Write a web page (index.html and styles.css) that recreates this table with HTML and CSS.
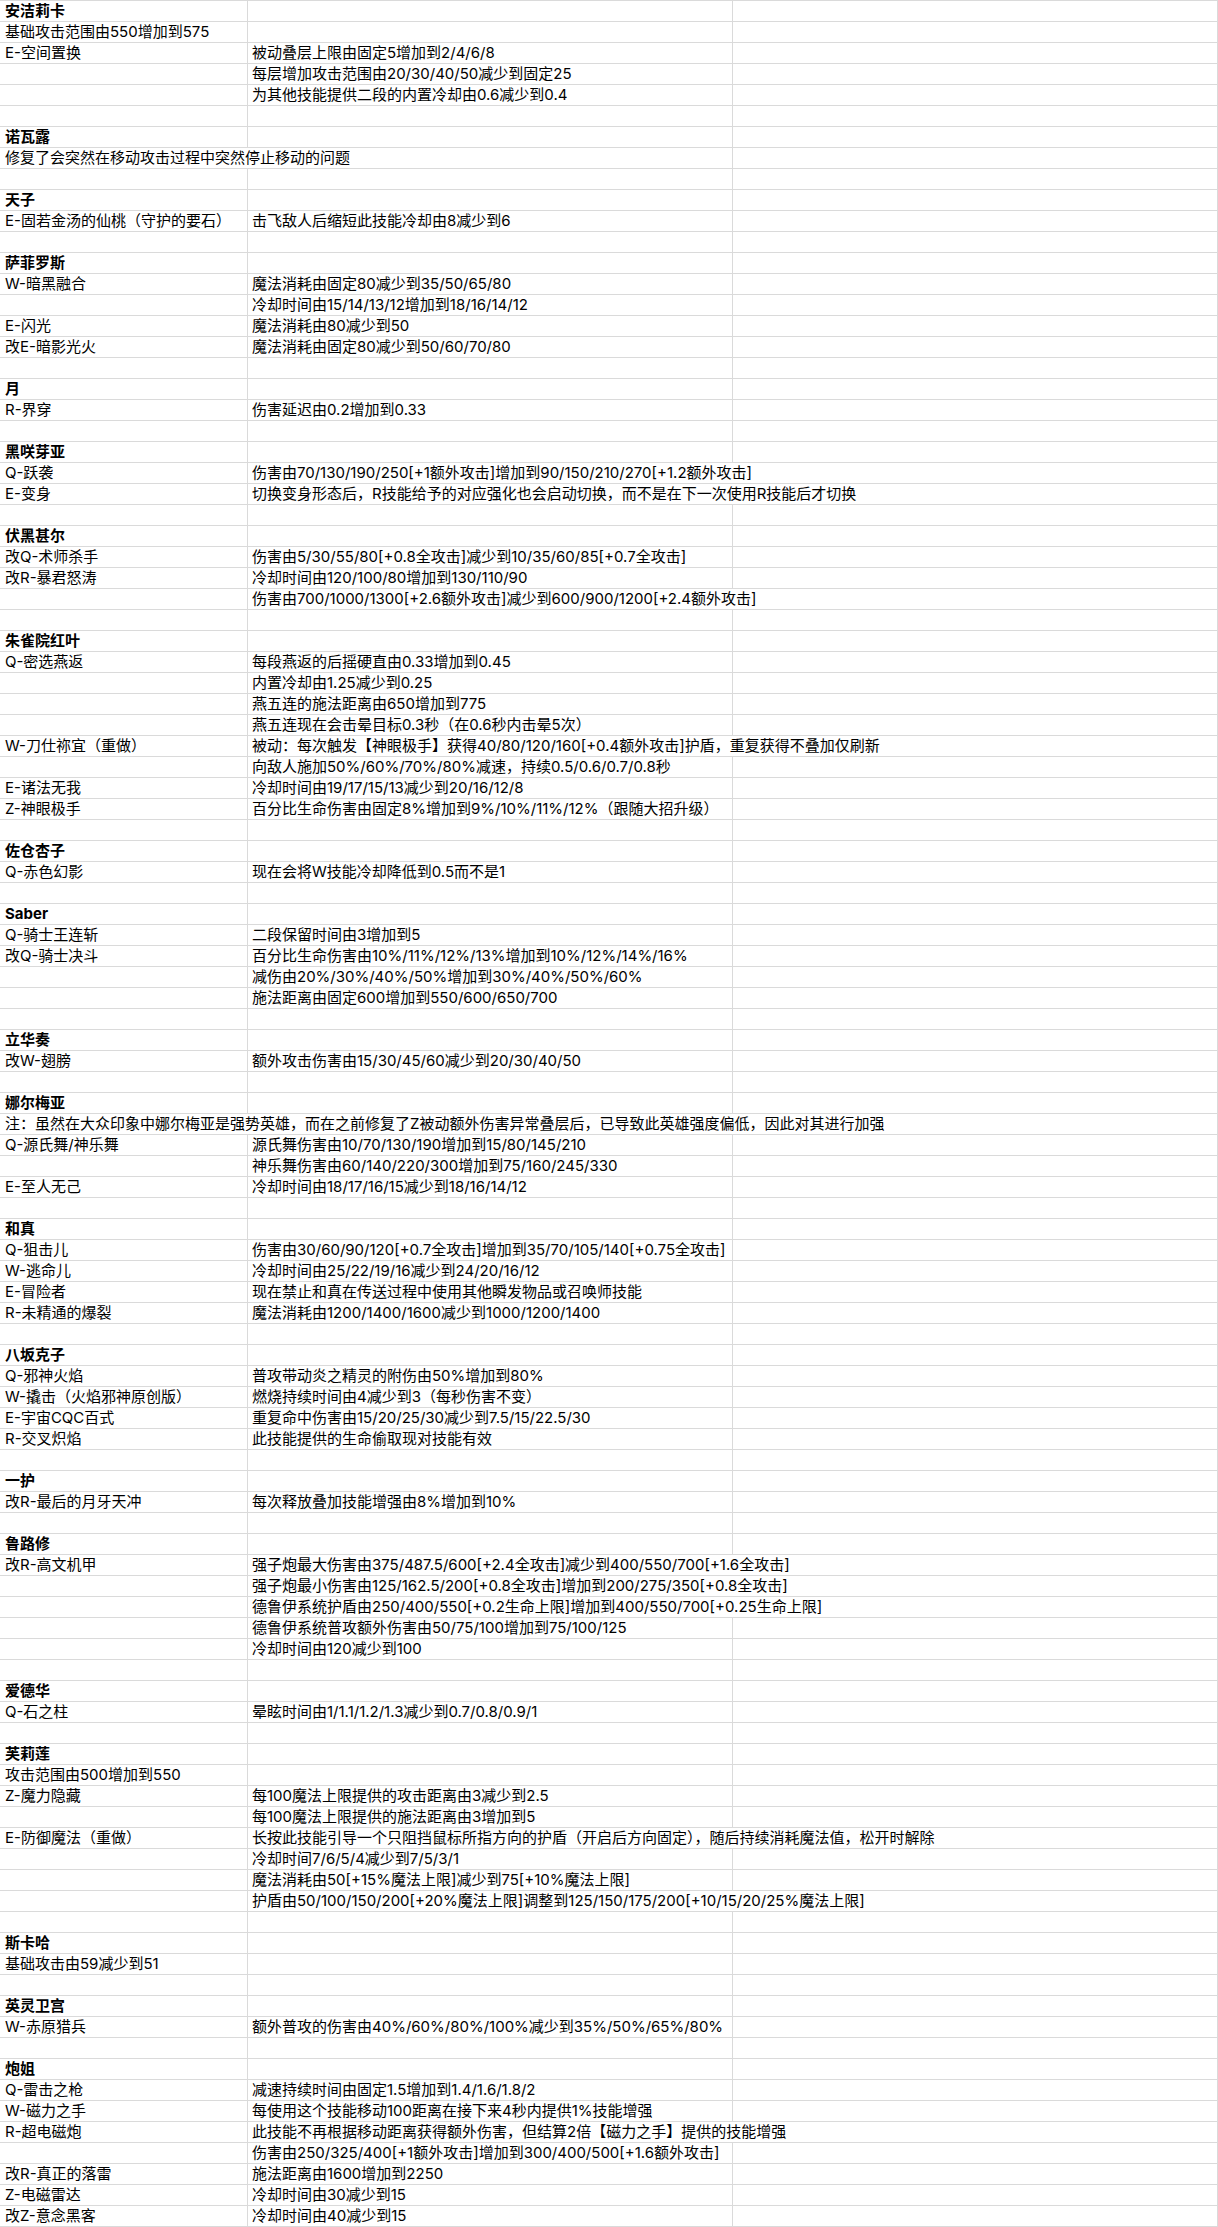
FILE: index.html
```html
<!DOCTYPE html>
<html lang="zh-CN">
<head>
<meta charset="utf-8">
<title>平衡性调整</title>
<link rel="stylesheet" href="styles.css">
</head>
<body>
<div class="sheet">
<div class="row"><div class="c h">安洁莉卡</div><div class="c"></div><div class="c"></div></div>
<div class="row"><div class="c">基础攻击范围由550增加到575</div><div class="c"></div><div class="c"></div></div>
<div class="row"><div class="c">E-空间置换</div><div class="c">被动叠层上限由固定5增加到2/4/6/8</div><div class="c"></div></div>
<div class="row"><div class="c"></div><div class="c">每层增加攻击范围由20/30/40/50减少到固定25</div><div class="c"></div></div>
<div class="row"><div class="c"></div><div class="c">为其他技能提供二段的内置冷却由0.6减少到0.4</div><div class="c"></div></div>
<div class="row"><div class="c"></div><div class="c"></div><div class="c"></div></div>
<div class="row"><div class="c h">诺瓦露</div><div class="c"></div><div class="c"></div></div>
<div class="row"><div class="c span2">修复了会突然在移动攻击过程中突然停止移动的问题</div><div class="c"></div></div>
<div class="row"><div class="c"></div><div class="c"></div><div class="c"></div></div>
<div class="row"><div class="c h">天子</div><div class="c"></div><div class="c"></div></div>
<div class="row"><div class="c">E-固若金汤的仙桃（守护的要石）</div><div class="c">击飞敌人后缩短此技能冷却由8减少到6</div><div class="c"></div></div>
<div class="row"><div class="c"></div><div class="c"></div><div class="c"></div></div>
<div class="row"><div class="c h">萨菲罗斯</div><div class="c"></div><div class="c"></div></div>
<div class="row"><div class="c">W-暗黑融合</div><div class="c">魔法消耗由固定80减少到35/50/65/80</div><div class="c"></div></div>
<div class="row"><div class="c"></div><div class="c">冷却时间由15/14/13/12增加到18/16/14/12</div><div class="c"></div></div>
<div class="row"><div class="c">E-闪光</div><div class="c">魔法消耗由80减少到50</div><div class="c"></div></div>
<div class="row"><div class="c">改E-暗影光火</div><div class="c">魔法消耗由固定80减少到50/60/70/80</div><div class="c"></div></div>
<div class="row"><div class="c"></div><div class="c"></div><div class="c"></div></div>
<div class="row"><div class="c h">月</div><div class="c"></div><div class="c"></div></div>
<div class="row"><div class="c">R-界穿</div><div class="c">伤害延迟由0.2增加到0.33</div><div class="c"></div></div>
<div class="row"><div class="c"></div><div class="c"></div><div class="c"></div></div>
<div class="row"><div class="c h">黑咲芽亚</div><div class="c"></div><div class="c"></div></div>
<div class="row"><div class="c">Q-跃袭</div><div class="c span2">伤害由70/130/190/250[+1额外攻击]增加到90/150/210/270[+1.2额外攻击]</div></div>
<div class="row"><div class="c">E-变身</div><div class="c span2">切换变身形态后，R技能给予的对应强化也会启动切换，而不是在下一次使用R技能后才切换</div></div>
<div class="row"><div class="c"></div><div class="c"></div><div class="c"></div></div>
<div class="row"><div class="c h">伏黑甚尔</div><div class="c"></div><div class="c"></div></div>
<div class="row"><div class="c">改Q-术师杀手</div><div class="c">伤害由5/30/55/80[+0.8全攻击]减少到10/35/60/85[+0.7全攻击]</div><div class="c"></div></div>
<div class="row"><div class="c">改R-暴君怒涛</div><div class="c">冷却时间由120/100/80增加到130/110/90</div><div class="c"></div></div>
<div class="row"><div class="c"></div><div class="c span2">伤害由700/1000/1300[+2.6额外攻击]减少到600/900/1200[+2.4额外攻击]</div></div>
<div class="row"><div class="c"></div><div class="c"></div><div class="c"></div></div>
<div class="row"><div class="c h">朱雀院红叶</div><div class="c"></div><div class="c"></div></div>
<div class="row"><div class="c">Q-密选燕返</div><div class="c">每段燕返的后摇硬直由0.33增加到0.45</div><div class="c"></div></div>
<div class="row"><div class="c"></div><div class="c">内置冷却由1.25减少到0.25</div><div class="c"></div></div>
<div class="row"><div class="c"></div><div class="c">燕五连的施法距离由650增加到775</div><div class="c"></div></div>
<div class="row"><div class="c"></div><div class="c">燕五连现在会击晕目标0.3秒（在0.6秒内击晕5次）</div><div class="c"></div></div>
<div class="row"><div class="c">W-刀仕祢宜（重做）</div><div class="c span2">被动：每次触发【神眼极手】获得40/80/120/160[+0.4额外攻击]护盾，重复获得不叠加仅刷新</div></div>
<div class="row"><div class="c"></div><div class="c">向敌人施加50%/60%/70%/80%减速，持续0.5/0.6/0.7/0.8秒</div><div class="c"></div></div>
<div class="row"><div class="c">E-诸法无我</div><div class="c">冷却时间由19/17/15/13减少到20/16/12/8</div><div class="c"></div></div>
<div class="row"><div class="c">Z-神眼极手</div><div class="c">百分比生命伤害由固定8%增加到9%/10%/11%/12%（跟随大招升级）</div><div class="c"></div></div>
<div class="row"><div class="c"></div><div class="c"></div><div class="c"></div></div>
<div class="row"><div class="c h">佐仓杏子</div><div class="c"></div><div class="c"></div></div>
<div class="row"><div class="c">Q-赤色幻影</div><div class="c">现在会将W技能冷却降低到0.5而不是1</div><div class="c"></div></div>
<div class="row"><div class="c"></div><div class="c"></div><div class="c"></div></div>
<div class="row"><div class="c h">Saber</div><div class="c"></div><div class="c"></div></div>
<div class="row"><div class="c">Q-骑士王连斩</div><div class="c">二段保留时间由3增加到5</div><div class="c"></div></div>
<div class="row"><div class="c">改Q-骑士决斗</div><div class="c">百分比生命伤害由10%/11%/12%/13%增加到10%/12%/14%/16%</div><div class="c"></div></div>
<div class="row"><div class="c"></div><div class="c">减伤由20%/30%/40%/50%增加到30%/40%/50%/60%</div><div class="c"></div></div>
<div class="row"><div class="c"></div><div class="c">施法距离由固定600增加到550/600/650/700</div><div class="c"></div></div>
<div class="row"><div class="c"></div><div class="c"></div><div class="c"></div></div>
<div class="row"><div class="c h">立华奏</div><div class="c"></div><div class="c"></div></div>
<div class="row"><div class="c">改W-翅膀</div><div class="c">额外攻击伤害由15/30/45/60减少到20/30/40/50</div><div class="c"></div></div>
<div class="row"><div class="c"></div><div class="c"></div><div class="c"></div></div>
<div class="row"><div class="c h">娜尔梅亚</div><div class="c"></div><div class="c"></div></div>
<div class="row"><div class="c span3">注：虽然在大众印象中娜尔梅亚是强势英雄，而在之前修复了Z被动额外伤害异常叠层后，已导致此英雄强度偏低，因此对其进行加强</div></div>
<div class="row"><div class="c">Q-源氏舞/神乐舞</div><div class="c">源氏舞伤害由10/70/130/190增加到15/80/145/210</div><div class="c"></div></div>
<div class="row"><div class="c"></div><div class="c">神乐舞伤害由60/140/220/300增加到75/160/245/330</div><div class="c"></div></div>
<div class="row"><div class="c">E-至人无己</div><div class="c">冷却时间由18/17/16/15减少到18/16/14/12</div><div class="c"></div></div>
<div class="row"><div class="c"></div><div class="c"></div><div class="c"></div></div>
<div class="row"><div class="c h">和真</div><div class="c"></div><div class="c"></div></div>
<div class="row"><div class="c">Q-狙击儿</div><div class="c">伤害由30/60/90/120[+0.7全攻击]增加到35/70/105/140[+0.75全攻击]</div><div class="c"></div></div>
<div class="row"><div class="c">W-逃命儿</div><div class="c">冷却时间由25/22/19/16减少到24/20/16/12</div><div class="c"></div></div>
<div class="row"><div class="c">E-冒险者</div><div class="c">现在禁止和真在传送过程中使用其他瞬发物品或召唤师技能</div><div class="c"></div></div>
<div class="row"><div class="c">R-未精通的爆裂</div><div class="c">魔法消耗由1200/1400/1600减少到1000/1200/1400</div><div class="c"></div></div>
<div class="row"><div class="c"></div><div class="c"></div><div class="c"></div></div>
<div class="row"><div class="c h">八坂克子</div><div class="c"></div><div class="c"></div></div>
<div class="row"><div class="c">Q-邪神火焰</div><div class="c">普攻带动炎之精灵的附伤由50%增加到80%</div><div class="c"></div></div>
<div class="row"><div class="c">W-撬击（火焰邪神原创版）</div><div class="c">燃烧持续时间由4减少到3（每秒伤害不变）</div><div class="c"></div></div>
<div class="row"><div class="c">E-宇宙CQC百式</div><div class="c">重复命中伤害由15/20/25/30减少到7.5/15/22.5/30</div><div class="c"></div></div>
<div class="row"><div class="c">R-交叉炽焰</div><div class="c">此技能提供的生命偷取现对技能有效</div><div class="c"></div></div>
<div class="row"><div class="c"></div><div class="c"></div><div class="c"></div></div>
<div class="row"><div class="c h">一护</div><div class="c"></div><div class="c"></div></div>
<div class="row"><div class="c">改R-最后的月牙天冲</div><div class="c">每次释放叠加技能增强由8%增加到10%</div><div class="c"></div></div>
<div class="row"><div class="c"></div><div class="c"></div><div class="c"></div></div>
<div class="row"><div class="c h">鲁路修</div><div class="c"></div><div class="c"></div></div>
<div class="row"><div class="c">改R-高文机甲</div><div class="c span2">强子炮最大伤害由375/487.5/600[+2.4全攻击]减少到400/550/700[+1.6全攻击]</div></div>
<div class="row"><div class="c"></div><div class="c span2">强子炮最小伤害由125/162.5/200[+0.8全攻击]增加到200/275/350[+0.8全攻击]</div></div>
<div class="row"><div class="c"></div><div class="c span2">德鲁伊系统护盾由250/400/550[+0.2生命上限]增加到400/550/700[+0.25生命上限]</div></div>
<div class="row"><div class="c"></div><div class="c">德鲁伊系统普攻额外伤害由50/75/100增加到75/100/125</div><div class="c"></div></div>
<div class="row"><div class="c"></div><div class="c">冷却时间由120减少到100</div><div class="c"></div></div>
<div class="row"><div class="c"></div><div class="c"></div><div class="c"></div></div>
<div class="row"><div class="c h">爱德华</div><div class="c"></div><div class="c"></div></div>
<div class="row"><div class="c">Q-石之柱</div><div class="c">晕眩时间由1/1.1/1.2/1.3减少到0.7/0.8/0.9/1</div><div class="c"></div></div>
<div class="row"><div class="c"></div><div class="c"></div><div class="c"></div></div>
<div class="row"><div class="c h">芙莉莲</div><div class="c"></div><div class="c"></div></div>
<div class="row"><div class="c">攻击范围由500增加到550</div><div class="c"></div><div class="c"></div></div>
<div class="row"><div class="c">Z-魔力隐藏</div><div class="c">每100魔法上限提供的攻击距离由3减少到2.5</div><div class="c"></div></div>
<div class="row"><div class="c"></div><div class="c">每100魔法上限提供的施法距离由3增加到5</div><div class="c"></div></div>
<div class="row"><div class="c">E-防御魔法（重做）</div><div class="c span2">长按此技能引导一个只阻挡鼠标所指方向的护盾（开启后方向固定），随后持续消耗魔法值，松开时解除</div></div>
<div class="row"><div class="c"></div><div class="c">冷却时间7/6/5/4减少到7/5/3/1</div><div class="c"></div></div>
<div class="row"><div class="c"></div><div class="c">魔法消耗由50[+15%魔法上限]减少到75[+10%魔法上限]</div><div class="c"></div></div>
<div class="row"><div class="c"></div><div class="c span2">护盾由50/100/150/200[+20%魔法上限]调整到125/150/175/200[+10/15/20/25%魔法上限]</div></div>
<div class="row"><div class="c"></div><div class="c"></div><div class="c"></div></div>
<div class="row"><div class="c h">斯卡哈</div><div class="c"></div><div class="c"></div></div>
<div class="row"><div class="c">基础攻击由59减少到51</div><div class="c"></div><div class="c"></div></div>
<div class="row"><div class="c"></div><div class="c"></div><div class="c"></div></div>
<div class="row"><div class="c h">英灵卫宫</div><div class="c"></div><div class="c"></div></div>
<div class="row"><div class="c">W-赤原猎兵</div><div class="c">额外普攻的伤害由40%/60%/80%/100%减少到35%/50%/65%/80%</div><div class="c"></div></div>
<div class="row"><div class="c"></div><div class="c"></div><div class="c"></div></div>
<div class="row"><div class="c h">炮姐</div><div class="c"></div><div class="c"></div></div>
<div class="row"><div class="c">Q-雷击之枪</div><div class="c">减速持续时间由固定1.5增加到1.4/1.6/1.8/2</div><div class="c"></div></div>
<div class="row"><div class="c">W-磁力之手</div><div class="c">每使用这个技能移动100距离在接下来4秒内提供1%技能增强</div><div class="c"></div></div>
<div class="row"><div class="c">R-超电磁炮</div><div class="c span2">此技能不再根据移动距离获得额外伤害，但结算2倍【磁力之手】提供的技能增强</div></div>
<div class="row"><div class="c"></div><div class="c">伤害由250/325/400[+1额外攻击]增加到300/400/500[+1.6额外攻击]</div><div class="c"></div></div>
<div class="row"><div class="c">改R-真正的落雷</div><div class="c">施法距离由1600增加到2250</div><div class="c"></div></div>
<div class="row"><div class="c">Z-电磁雷达</div><div class="c">冷却时间由30减少到15</div><div class="c"></div></div>
<div class="row"><div class="c">改Z-意念黑客</div><div class="c">冷却时间由40减少到15</div><div class="c"></div></div>
</div>
</body>
</html>
```

FILE: styles.css
```css
html, body {
  margin: 0;
  padding: 0;
  background: #ffffff;
}

body {
  font-family: Inter, "Noto Sans CJK SC", sans-serif;
  font-size: 15px;
  color: #000000;
}

.sheet {
  width: 1218px;
  border-top: 1px solid #dadada;
}

.row {
  display: grid;
  grid-template-columns: 248px 485px 485px;
  height: 21px;
}

.c {
  box-sizing: border-box;
  height: 21px;
  padding: 0 4px 0 5px;
  line-height: 20px;
  border-right: 1px solid #dadada;
  border-bottom: 1px solid #dadada;
  white-space: nowrap;
  overflow: visible;
}

.c:nth-child(2) {
  padding-left: 4px;
}

.h {
  font-weight: 700;
}

.span2 {
  grid-column: span 2;
}

.span3 {
  grid-column: span 3;
}
```
